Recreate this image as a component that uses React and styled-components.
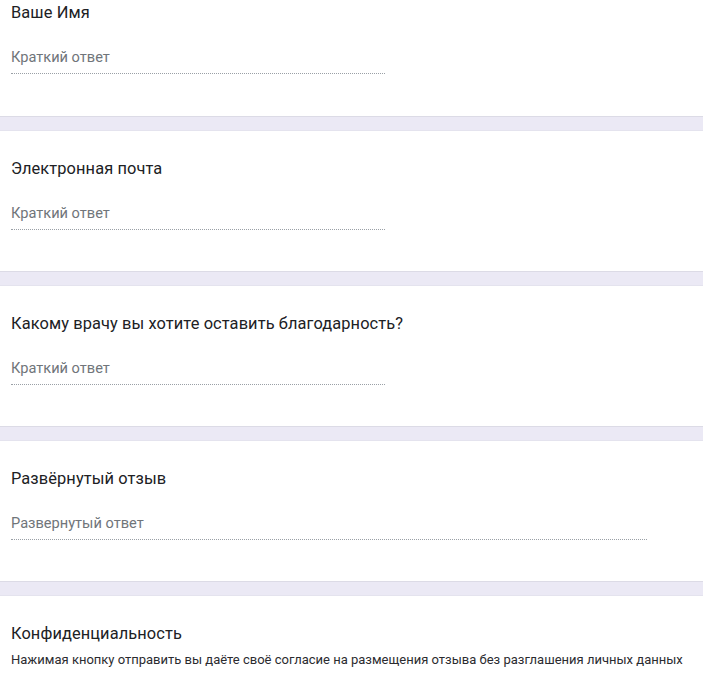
import React from 'react'
import styled, { createGlobalStyle } from 'styled-components'

const questions = [
  { title: 'Ваше Имя', placeholder: 'Краткий ответ' },
  { title: 'Электронная почта', placeholder: 'Краткий ответ' },
  { title: 'Какому врачу вы хотите оставить благодарность?', placeholder: 'Краткий ответ' },
  { title: 'Развёрнутый отзыв', placeholder: 'Развернутый ответ', long: true },
]

const App = () => (
  <>
    <GlobalStyle />
    <Page>
      {questions.map((q, i) => (
        <React.Fragment key={q.title}>
          <Card $first={i === 0}>
            <Title>{q.title}</Title>
            <Answer $long={q.long}>{q.placeholder}</Answer>
          </Card>
          <Divider />
        </React.Fragment>
      ))}
      <Card>
        <Title>Конфиденциальность</Title>
        <Note>
          Нажимая кнопку отправить вы даёте своё согласие на размещения отзыва без разглашения личных данных
        </Note>
      </Card>
    </Page>
  </>
)

const GlobalStyle = createGlobalStyle`
  html, body {
    margin: 0;
    padding: 0;
    background: #fff;
    overflow: hidden;
  }
`

const Page = styled.main`
  display: flex;
  flex-direction: column;
  width: 703px;
  font-family: Roboto, 'Liberation Sans', sans-serif;
`

/* the first card is scrolled past its top edge in the shot */
const Card = styled.section`
  display: flex;
  flex-direction: column;
  align-items: flex-start;
  height: ${p => (p.$first ? '116px' : '140px')};
  box-sizing: border-box;
  padding: ${p => (p.$first ? '3px' : '28px')} 11px 0;
  background: #fff;
`

const Divider = styled.div`
  height: 13px;
  background: #ebe9f5;
  border-top: 1px solid #dcdbe6;
  border-bottom: 1px solid #e4e3ee;
`

const Title = styled.h2`
  margin: 0;
  font-size: 16.4px;
  font-weight: 400;
  line-height: 20px;
  letter-spacing: 0.1px;
  color: #202124;
`

const Answer = styled.div`
  width: ${p => (p.$long ? '636px' : '374px')};
  margin-top: 24px;
  padding-bottom: 6px;
  font-size: 14.6px;
  line-height: 20px;
  color: #70757a;
  border-bottom: 1px dotted #9aa0a6;
`

const Note = styled.p`
  margin: 7px 0 0;
  font-size: 13px;
  line-height: 18px;
  color: #2b2b2f;
  white-space: nowrap;
`

export default App
